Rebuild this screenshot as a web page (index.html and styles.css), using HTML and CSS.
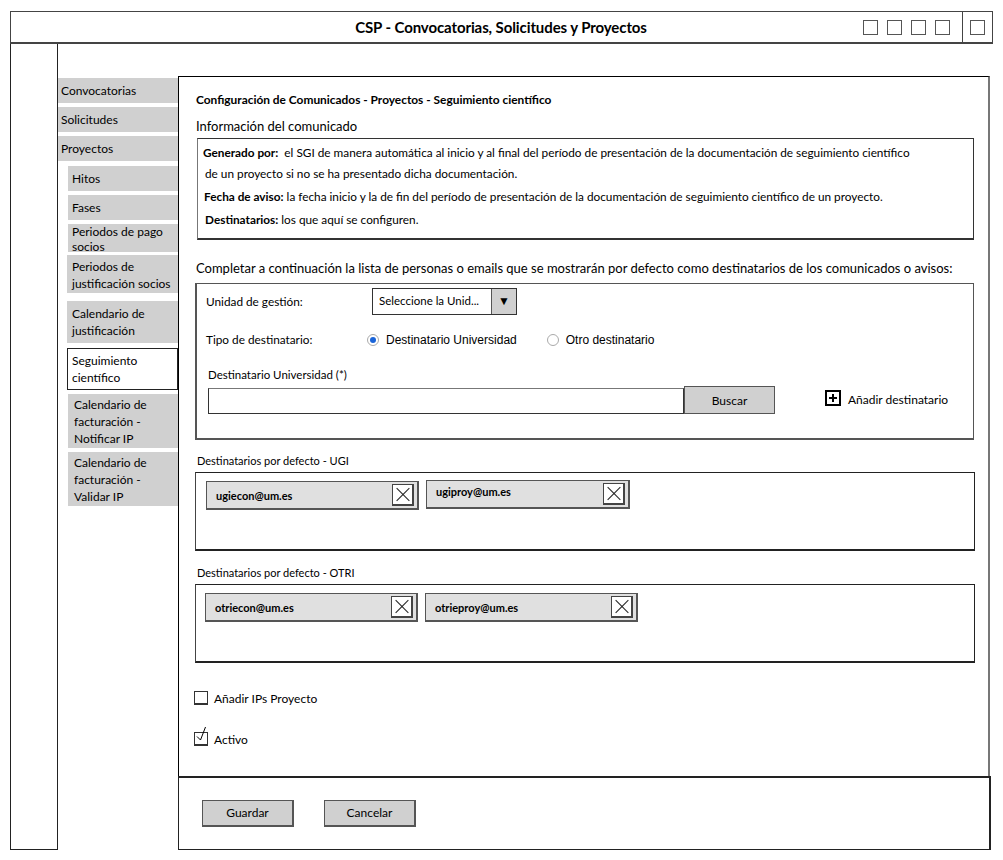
FILE: index.html
```html
<!DOCTYPE html>
<html lang="es">
<head>
<meta charset="utf-8">
<title>CSP - Convocatorias, Solicitudes y Proyectos</title>
<link rel="stylesheet" href="styles.css">
</head>
<body>
<div class="app">
  <header class="header">
    <div class="title">CSP - Convocatorias, Solicitudes y Proyectos</div>
    <div class="win-ctrls">
      <span class="wbox"></span><span class="wbox"></span><span class="wbox"></span><span class="wbox"></span>
    </div>
    <div class="win-last"><span class="wbox"></span></div>
  </header>
  <div class="body-row">
    <div class="strip"></div>
    <nav class="nav">
      <div class="nav-item">Convocatorias</div>
      <div class="nav-item">Solicitudes</div>
      <div class="nav-item">Proyectos</div>
      <div class="sub sub-1">Hitos</div>
      <div class="sub sub-1">Fases</div>
      <div class="sub sub-pago">Periodos de pago socios</div>
      <div class="sub sub-2 sub-just">Periodos de justificación socios</div>
      <div class="sub sub-2 sub-cal">Calendario de justificación</div>
      <div class="sub sub-2 active">Seguimiento científico</div>
      <div class="sub sub-3">Calendario de facturación - Notificar IP</div>
      <div class="sub sub-3">Calendario de facturación - Validar IP</div>
    </nav>
    <div class="main">
      <section class="panel">
        <h1 class="page-title">Configuración de Comunicados - Proyectos - Seguimiento científico</h1>
        <div class="section-title">Información del comunicado</div>
        <div class="info-box">
          <div class="info-line l1"><b>Generado por:</b>&nbsp; el SGI de manera automática al inicio y al final del período de presentación de la documentación de seguimiento científico</div>
          <div class="info-line l2">de un proyecto si no se ha presentado dicha documentación.</div>
          <div class="info-line l3"><b>Fecha de aviso:</b> la fecha inicio y la de fin del período de presentación de la documentación de seguimiento científico de un proyecto.</div>
          <div class="info-line l4"><b>Destinatarios:</b> los que aquí se configuren.</div>
        </div>
        <div class="section-title s2">Completar a continuación la lista de personas o emails que se mostrarán por defecto como destinatarios de los comunicados o avisos:</div>
        <div class="form-box">
          <div class="form-row r1">
            <span class="lbl">Unidad de gestión:</span>
            <div class="select"><span class="sel-text">Seleccione la Unid...</span><span class="sel-btn">▼</span></div>
          </div>
          <div class="form-row r2">
            <span class="lbl">Tipo de destinatario:</span>
            <span class="radio on"></span><span class="rlbl">Destinatario Universidad</span>
            <span class="radio off"></span><span class="rlbl">Otro destinatario</span>
          </div>
          <div class="field-lbl">Destinatario Universidad (*)</div>
          <div class="search-row">
            <div class="input"></div>
            <div class="btn-buscar">Buscar</div>
            <div class="add">
              <svg width="16" height="16" viewBox="0 0 16 16"><rect x="1" y="1" width="14" height="14" fill="#fff" stroke="#000" stroke-width="2"/><path d="M8 4v8M4 8h8" stroke="#000" stroke-width="2"/></svg>
              <span>Añadir destinatario</span>
            </div>
          </div>
        </div>
        <div class="group-title">Destinatarios por defecto - UGI</div>
        <div class="chip-box">
          <div class="chip w1"><span>ugiecon@um.es</span><span class="x"></span></div>
          <div class="chip w2 up"><span>ugiproy@um.es</span><span class="x"></span></div>
        </div>
        <div class="group-title g2">Destinatarios por defecto - OTRI</div>
        <div class="chip-box">
          <div class="chip w3"><span>otriecon@um.es</span><span class="x"></span></div>
          <div class="chip w4"><span>otrieproy@um.es</span><span class="x"></span></div>
        </div>
        <label class="check c1"><span class="cbox"></span>Añadir IPs Proyecto</label>
        <label class="check c2"><span class="cbox checked"><svg width="16" height="18" viewBox="0 0 16 18"><path d="M3 10.5 L6.5 14 L11.5 1" fill="none" stroke="#000" stroke-width="1"/></svg></span>Activo</label>
      </section>
      <footer class="footer">
        <div class="btn">Guardar</div>
        <div class="btn">Cancelar</div>
      </footer>
    </div>
  </div>
</div>
</body>
</html>
```
FILE: styles.css
```css
* { box-sizing: border-box; }
html, body { margin: 0; padding: 0; background: #fff; }
body { font-family: Lato, "Open Sans", sans-serif; color: #000; font-size: 12px; }
.app { padding: 11px 0 0 10px; width: 993px; }

.header {
  height: 33px; width: 983px;
  border: 1px solid #444; border-bottom: 2px solid #444;
  display: flex; align-items: center; position: relative;
}
.title { flex: 1; text-align: center; font-weight: bold; font-size: 15px; padding-left: 128px; letter-spacing: -0.1px; }
.win-ctrls { display: flex; gap: 9px; margin-right: 12px; }
.wbox { display: block; width: 15px; height: 15px; border: 1px solid #555; }
.win-last { border-left: 1px solid #444; height: 100%; width: 30px; display: flex; align-items: center; justify-content: center; }

.body-row { display: flex; height: 807px; margin-top: -1px; }
.strip { width: 48px; border-left: 1px solid #222; border-right: 1px solid #222; border-bottom: 1px solid #222; }
.nav { width: 120px; padding-top: 35px; font-size: 12px; line-height: 17px; }
.nav-item { background: #d0d0d0; height: 25px; padding: 4px 3px; margin-bottom: 4px; }
.nav-item:nth-child(3) { margin-bottom: 5px; }
.sub { background: #d0d0d0; margin-left: 10px; padding: 4px 4px; }
.sub-1 { height: 25px; margin-bottom: 4px; }
.sub-pago { height: 28px; margin-bottom: 3px; padding: 0 4px; line-height: 15px; }
.sub-2 { margin-left: 9px; padding: 3px 5px; margin-bottom: 5px; }
.sub-just { height: 38px; margin-bottom: 8px; }
.sub-cal { height: 42px; padding-top: 4px; }
.sub.active { background: #fff; border: 1px solid #222; height: 42px; padding: 3px 4px; margin-right: 0; margin-bottom: 4px; }
.sub-3 { height: 54px; padding: 2px 6px; margin-bottom: 4px; }

.main { width: 812px; margin-top: 33px; display: flex; flex-direction: column; }
.panel {
  height: 701px; border-top: 1px solid #000; border-left: 1px solid #000; border-right: 2px solid #777;
  padding: 0 0 0 17px;
}
.page-title { font-size: 11.9px; font-weight: bold; margin: 16px 0 0 0; line-height: 14px; }
.section-title { font-size: 13px; margin: 11px 0 0 0; line-height: 16px; }
.info-box {
  width: 777px; height: 102px; margin: 4px 0 0 1px;
  border: 1px solid #333; border-left-color: #777; border-bottom: 2px solid #333;
  padding: 3px 0 0 5px; font-size: 11.8px; line-height: 22px;
}
.info-line.l2 { padding-left: 2px; line-height: 20px; }
.info-line.l3 { padding-left: 1px; line-height: 25px; }
.info-line.l4 { padding-left: 2px; line-height: 21px; }
.s2 { margin-top: 20px; }
.form-box {
  width: 779px; height: 157px; margin: 7px 0 0 -1px;
  border: 2px solid #555; border-top-width: 1px; border-right-width: 1px;
  padding: 4px 0 0 9px; font-size: 11.8px;
}
.form-row { display: flex; align-items: center; }
.r1 { height: 27px; }
.lbl { width: 166px; }
.select { display: flex; width: 145px; height: 27px; border: 1px solid #333; }
.sel-text { flex: 1; padding: 5px 0 0 6px; font-size: 11.5px; }
.sel-btn { width: 25px; background: #d0d0d0; border-left: 1px solid #555; text-align: center; font-size: 12px; line-height: 24px; }
.r2 .lbl { width: 159px; }
.r2 { margin-top: 16px; height: 17px; }
.radio { width: 12px; height: 12px; border-radius: 50%; border: 1px solid #aaa; margin-left: 2px; background: #fff; position: relative; }
.radio.on::after { content: ""; position: absolute; left: 2px; top: 2px; width: 6px; height: 6px; border-radius: 50%; background: #1a64d8; }
.radio.off { margin-left: 30px; }
.rlbl { font-family: "Liberation Sans", Arial, sans-serif; font-size: 12px; margin-left: 7px; }
.field-lbl { margin: 19px 0 0 2px; font-size: 11.5px; line-height: 16px; }
.search-row { display: flex; align-items: center; margin-top: 5px; margin-left: 2px; }
.input { width: 476px; height: 26px; border: 1px solid #333; border-top-color: #777; }
.btn-buscar { width: 91px; height: 28px; margin-top: -2px; background: #d0d0d0; border: 1px solid #555; text-align: center; line-height: 27px; font-size: 12px; }
.add { display: flex; align-items: center; margin-left: 50px; margin-top: -3px; gap: 7px; font-size: 12px; }
.add svg { display: block; margin-top: -3px; }

.group-title { font-size: 11px; margin: 13px 0 0 1px; line-height: 16px; }
.g2 { margin-top: 14px; }
.chip-box {
  width: 780px; height: 79px; margin: 3px 0 0 -1px;
  border: 1px solid #222; border-left-color: #444; border-bottom-width: 2px;
  display: flex; align-items: flex-start; gap: 7px; padding: 8px 0 0 10px;
}
.chip {
  height: 29px; background: #e0e0e0; border: 1px solid #555; border-bottom-width: 2px; border-right-width: 2px;
  display: flex; align-items: center; justify-content: space-between;
  padding: 0 3px 0 9px; font-weight: bold; font-size: 11px;
}
.chip.up { margin-top: -1px; }
.chip.up span:first-child { margin-top: -5px; }
.w1 { width: 213px; }
.w2 { width: 204px; }
.w3 { width: 213px; margin-left: -1px; }
.w4 { width: 213px; }
.chip .x {
  width: 22px; height: 22px; background: #fff; border: 1px solid #444; border-width: 1px 2px 2px 1px;
  position: relative; flex: none;
}
.chip .x::before, .chip .x::after {
  content: ""; position: absolute; left: 1px; top: 9px; width: 18px; height: 1px; background: #222;
  transform: rotate(45deg);
}
.chip .x::after { transform: rotate(-45deg); }
.chip.w2 .x { margin-top: -1px; }

.check { display: flex; align-items: center; gap: 6px; font-size: 12px; }
.c1 { margin: 27px 0 0 -2px; height: 16px; }
.c2 { margin: 25px 0 0 -2px; height: 16px; }
.cbox { width: 14px; height: 14px; border: 1px solid #333; border-width: 1px 1px 2px 1px; position: relative; }
.cbox svg { position: absolute; left: -1px; top: -7px; }

.footer {
  height: 74px; border: 1px solid #222; border-top-width: 2px; border-right-width: 2px;
  display: flex; gap: 30px; padding: 22px 0 0 23px; margin-right: -1px;
}
.btn { width: 92px; height: 27px; background: #d0d0d0; border: 1px solid #555; border-width: 1px 2px 2px 1px; text-align: center; line-height: 24px; font-size: 12px; }
```
